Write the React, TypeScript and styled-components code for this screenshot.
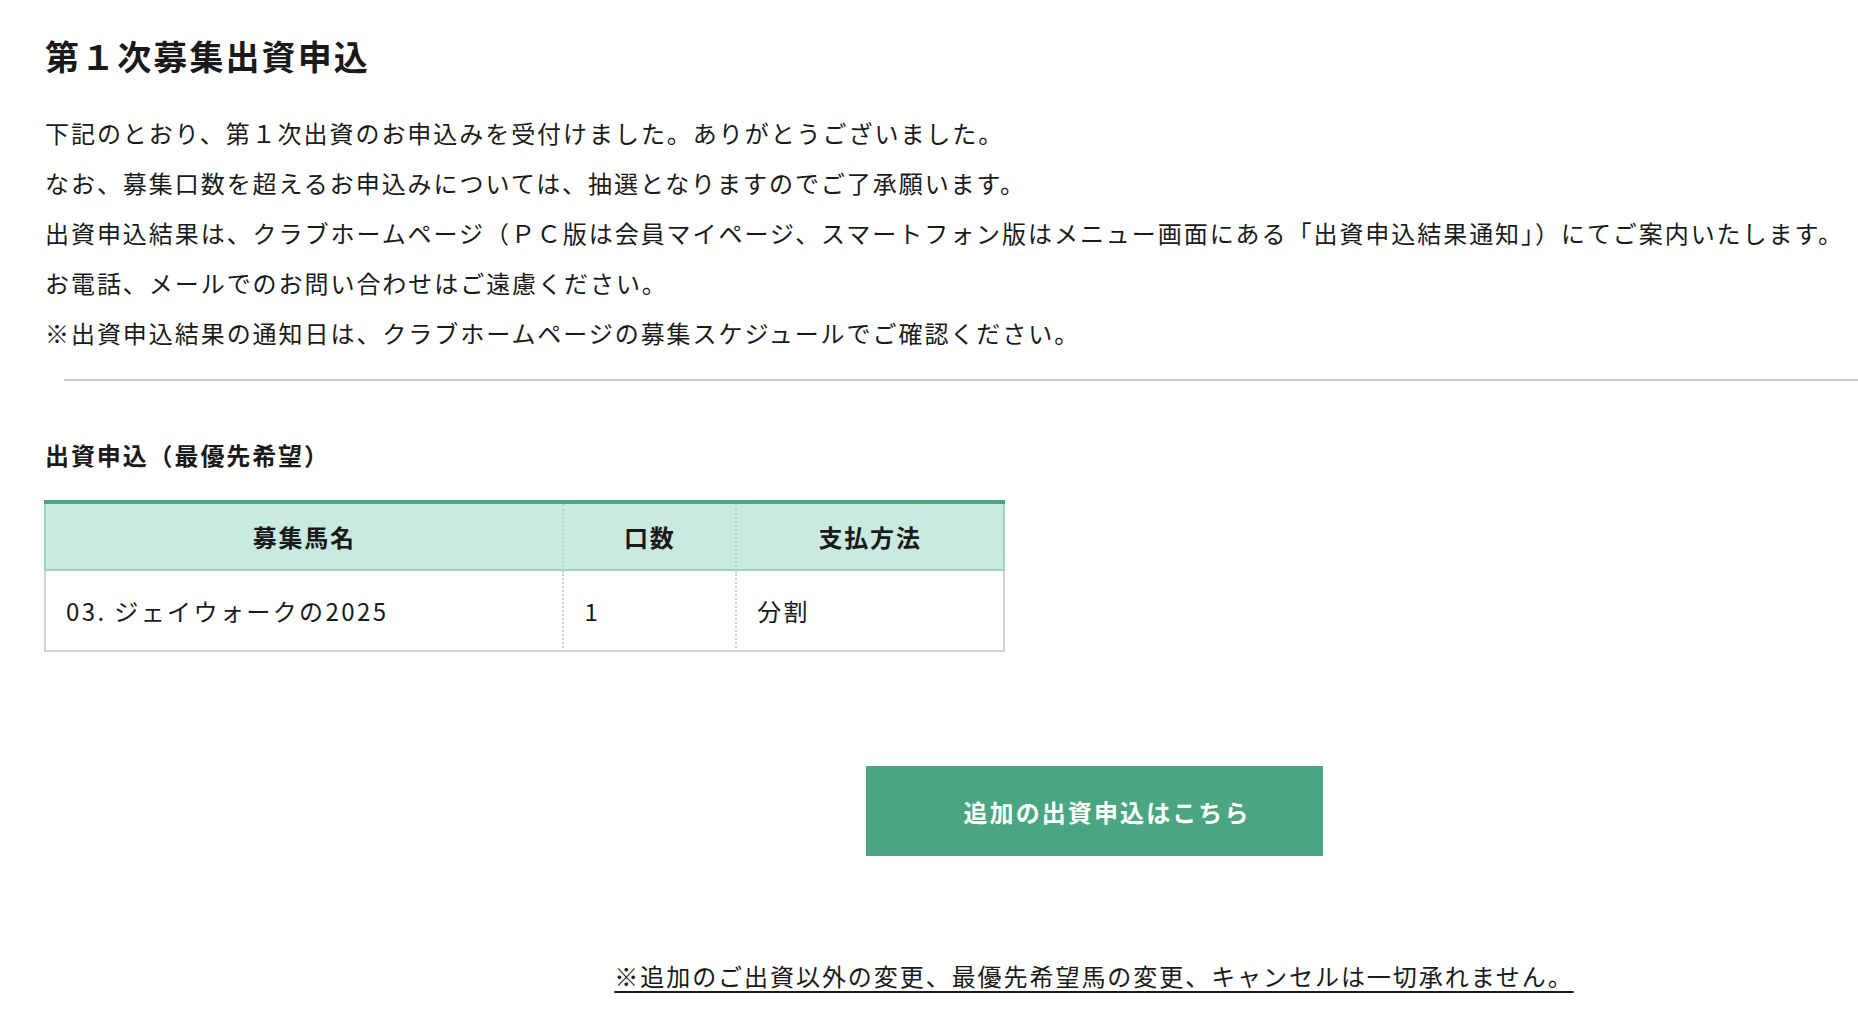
import styled, { createGlobalStyle } from "styled-components";

const GlobalStyle = createGlobalStyle`
  html, body {
    margin: 0;
    padding: 0;
    background: #ffffff;
  }

  body {
    font-family: "Noto Sans CJK JP", "Noto Sans", sans-serif;
    color: #1a1a1a;
    overflow: hidden;
  }
`;

interface Application {
  horseName: string;
  units: number;
  payment: string;
}

const applications: Application[] = [
  { horseName: "03. ジェイウォークの2025", units: 1, payment: "分割" },
];

const messages = [
  "下記のとおり、第１次出資のお申込みを受付けました。ありがとうございました。",
  "なお、募集口数を超えるお申込みについては、抽選となりますのでご了承願います。",
  "出資申込結果は、クラブホームページ（ＰＣ版は会員マイページ、スマートフォン版はメニュー画面にある「出資申込結果通知」）にてご案内いたします。",
  "お電話、メールでのお問い合わせはご遠慮ください。",
  "※出資申込結果の通知日は、クラブホームページの募集スケジュールでご確認ください。",
];

const Page = styled.main`
  padding: 32px 0 40px 45px;
`;

const Title = styled.h1`
  margin: 0;
  font-size: 34px;
  line-height: 48px;
  font-weight: 700;
  letter-spacing: 2.1px;
`;

const Message = styled.div`
  margin-top: 28px;
`;

const MessageLine = styled.p`
  margin: 0;
  font-size: 24px;
  line-height: 50px;
  letter-spacing: 1.95px;
`;

const Rule = styled.hr`
  margin: 21px 0 0 19px;
  border: none;
  border-top: 2px solid #cccccc;
`;

const SectionTitle = styled.h2`
  margin: 56px 0 0;
  font-size: 24px;
  line-height: 36px;
  font-weight: 700;
  letter-spacing: 1.9px;
`;

const Table = styled.table`
  margin-top: 27px;
  width: 961px;
  border-spacing: 0;
  border-collapse: separate;
  border-top: 4px solid #4aa680;
  margin-left: -1px;
`;

const HeadCell = styled.th<{ $width: number }>`
  width: ${({ $width }) => $width}px;
  height: 65px;
  padding: 0;
  background: #c8eae0;
  font-size: 24px;
  font-weight: 700;
  text-align: center;
  letter-spacing: 1.8px;
  border-bottom: 2px solid #9dd4c0;
  border-left: 2px dotted #a9d8c8;

  &:first-child {
    border-left: 2px solid #9dd4c0;
  }

  &:last-child {
    border-right: 2px solid #9dd4c0;
  }
`;

const BodyCell = styled.td`
  height: 79px;
  padding: 0 20px;
  font-size: 24px;
  letter-spacing: 2.4px;
  border-bottom: 2px solid #d2d2d2;
  border-left: 2px dotted #cfcfcf;

  &:first-child {
    border-left: 2px solid #d2d2d2;
  }

  &:last-child {
    border-right: 2px solid #d2d2d2;
  }
`;

const Actions = styled.section`
  display: flex;
  flex-direction: column;
  align-items: center;
  padding-left: 285px;
  margin-top: 114px;
`;

const PrimaryButton = styled.button`
  width: 457px;
  height: 90px;
  padding: 0 0 0 26px;
  border: none;
  background: #4aa680;
  color: #ffffff;
  font-family: inherit;
  font-size: 24px;
  font-weight: 700;
  letter-spacing: 2.1px;
  cursor: pointer;
`;

const Note = styled.a`
  margin-top: 102px;
  font-size: 24px;
  line-height: 36px;
  color: #1a1a1a;
  text-decoration: underline;
  text-underline-offset: 5px;
  letter-spacing: 1.95px;
`;

export default function App() {
  return (
    <>
      <GlobalStyle />
      <Page>
        <Title>第１次募集出資申込</Title>
        <Message>
          {messages.map(line => (
            <MessageLine key={line}>{line}</MessageLine>
          ))}
        </Message>
        <Rule />

        <SectionTitle>出資申込（最優先希望）</SectionTitle>
        <Table>
          <thead>
            <tr>
              <HeadCell $width={521}>募集馬名</HeadCell>
              <HeadCell $width={172}>口数</HeadCell>
              <HeadCell $width={268}>支払方法</HeadCell>
            </tr>
          </thead>
          <tbody>
            {applications.map(app => (
              <tr key={app.horseName}>
                <BodyCell>{app.horseName}</BodyCell>
                <BodyCell>{app.units}</BodyCell>
                <BodyCell>{app.payment}</BodyCell>
              </tr>
            ))}
          </tbody>
        </Table>

        <Actions>
          <PrimaryButton type="button">追加の出資申込はこちら</PrimaryButton>
          <Note href="#">※追加のご出資以外の変更、最優先希望馬の変更、キャンセルは一切承れません。</Note>
        </Actions>
      </Page>
    </>
  );
}
